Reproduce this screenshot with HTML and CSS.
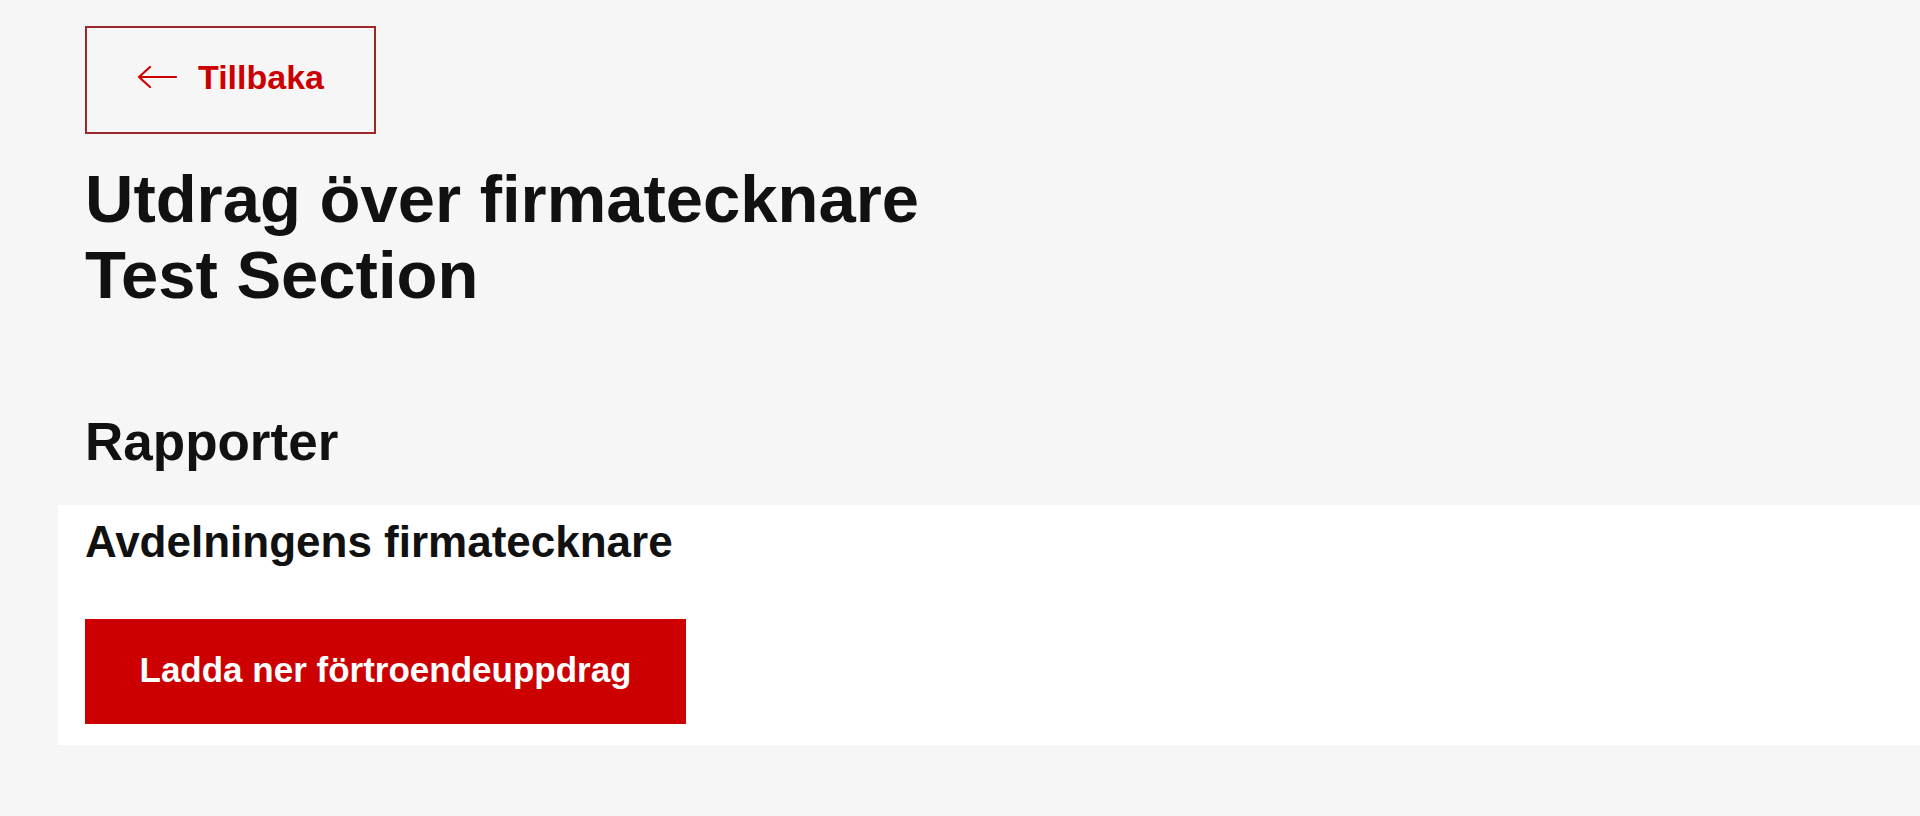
FILE: index.html
```html
<!DOCTYPE html>
<html lang="sv">
<head>
	<meta charset="UTF-8">
	<title>Utdrag över firmatecknare</title>
	<link rel="stylesheet" href="styles.css">
</head>
<body>
	<div class="page">
		<div class="top">
			<a class="back" href="#">
				<svg class="back-arrow" width="40" height="24" viewBox="0 0 40 24">
					<path d="M39 12H2M13 2L2 12l11 10" fill="none" stroke="#c00" stroke-width="2.2" stroke-linecap="round" stroke-linejoin="round"/>
				</svg>
				<span>Tillbaka</span>
			</a>
			<h1>Utdrag över firmatecknare<br>Test Section</h1>
			<h2>Rapporter</h2>
		</div>
		<div class="panel">
			<h3>Avdelningens firmatecknare</h3>
			<button class="download" type="button">Ladda ner förtroendeuppdrag</button>
		</div>
	</div>
</body>
</html>
```

FILE: styles.css
```css
*{
	margin:0;
	padding:0;
	box-sizing:border-box;
}
html,body{
	background:#f6f6f6;
	font-family:"Liberation Sans",Arial,sans-serif;
	color:#111;
}
.page{
	padding:26px 0 0 58px;
}
.top{
	padding-left:27px;
}
.back{
	display:flex;
	align-items:center;
	gap:21px;
	width:291px;
	height:108px;
	padding:0 0 6px 50px;
	border:2px solid #9a2828;
	color:#c00;
	font-size:34px;
	font-weight:bold;
	text-decoration:none;
}
.back-arrow{
	display:block;
	flex:none;
}
h1{
	margin-top:27px;
	font-size:67px;
	line-height:76px;
	font-weight:bold;
}
h2{
	margin-top:99px;
	font-size:53px;
	line-height:60px;
	font-weight:bold;
}
.panel{
	margin-top:33px;
	background:#fff;
	padding:11px 27px 21px;
}
h3{
	font-size:44px;
	line-height:52px;
	font-weight:bold;
}
.download{
	display:block;
	margin-top:51px;
	width:601px;
	height:105px;
	padding-bottom:4px;
	border:none;
	background:#cc0000;
	color:#fff;
	font-family:"Liberation Sans",Arial,sans-serif;
	font-size:35px;
	font-weight:bold;
	cursor:pointer;
}
```
